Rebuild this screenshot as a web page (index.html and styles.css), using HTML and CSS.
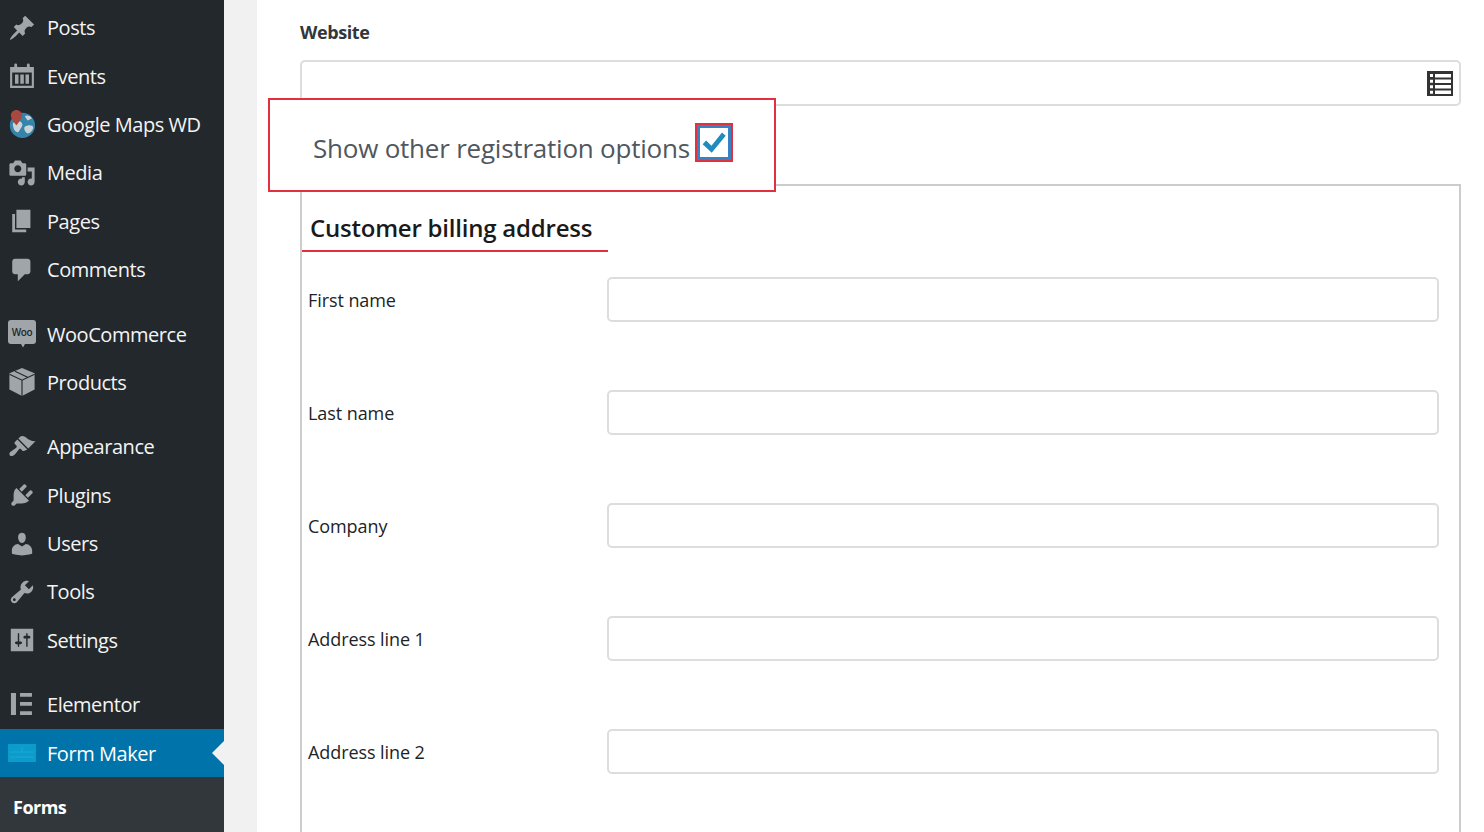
FILE: index.html
```html
<!DOCTYPE html>
<html lang="en">
  <head>
    <meta charset="utf-8">
    <title>Form Maker</title>
    <link rel="stylesheet" href="styles.css">
  </head>
  <body>
    <div class="page">
      <nav class="sidebar">
        <ul class="menu">
          <li class="item"><svg class="icon" viewBox="0 0 20 20"><path d="M10.44 3.02l1.82-1.82 6.36 6.35-1.83 1.82c-1.05-.68-2.48-.57-3.41.36l-.75.75c-.92.93-1.04 2.35-.35 3.41l-1.83 1.82-2.41-2.41-2.8 2.79c-.42.42-3.38 2.71-3.8 2.29s1.86-3.39 2.28-3.81l2.79-2.79L4.1 9.36l1.83-1.82c1.05.69 2.48.57 3.4-.36l.75-.75c.93-.92 1.05-2.35.36-3.41z"/></svg>Posts</li>
          <li class="item"><svg class="icon" viewBox="0 0 20 20"><path fill-rule="evenodd" d="M1.500 3.500h3V2a1 1 0 0 1 2 0v1.500h7V2a1 1 0 0 1 2 0v1.500h3v15h-17zM3 7.500v9.500h14V7.500zM5 9h2.500v6.500H5zM8.800 9h2.500v6.500H8.800zM12.500 9H15v6.500h-2.500z"/></svg>Events</li>
          <li class="item"><svg class="icon" viewBox="0 0 20 20"><circle cx="10.300" cy="11" r="9" fill="#3585ab"/><path d="M4 9c2-2 5-1.500 6 .5s-1 3.500-2 5.500-3.500 0-4-2-1-3 0-4z" fill="#c9d3d8"/><path d="M12 12c2-1.500 6-1.500 6 .5s-3 5-4.500 4-2.500-3.500-1.500-4.500z" fill="#c9d3d8"/><path d="M12 4.500c1.500-1 4-.5 5 1.500l-3 1.500z" fill="#c9d3d8"/><path d="M6 0C3.800 0 2 1.800 2 3.800 2 6.500 6 11 6 11s4-4.500 4-7.200C10 1.800 8.200 0 6 0z" fill="#a8483f"/></svg>Google Maps WD</li>
          <li class="item"><svg class="icon" viewBox="0 0 20 20"><path d="M13 11V4c0-.55-.45-1-1-1h-1.670L9 1H5L3.670 3H2c-.55 0-1 .45-1 1v7c0 .55.45 1 1 1h10c.55 0 1-.45 1-1zM7 4.500c1.380 0 2.500 1.120 2.500 2.500S8.380 9.500 7 9.500 4.500 8.380 4.500 7 5.620 4.500 7 4.500zM14 6h5v10.500c0 1.380-1.120 2.500-2.500 2.500S14 17.880 14 16.500s1.120-2.500 2.500-2.500c.17 0 .34.02.5.05V9h-3V6zm-4 8.050V13h2v3.500c0 1.380-1.120 2.500-2.500 2.500S7 17.880 7 16.500 8.120 14 9.500 14c.17 0 .34.02.5.05z"/></svg>Media</li>
          <li class="item"><svg class="icon" viewBox="0 0 20 20"><path d="M6 15V2h10v13H6zm-1 1h8v2H3V5h2v11z"/></svg>Pages</li>
          <li class="item"><svg class="icon" viewBox="0 0 20 20"><path d="M5 2h9c1.100 0 2 .9 2 2v7c0 1.100-.9 2-2 2h-2l-5 5v-5H5c-1.100 0-2-.9-2-2V4c0-1.100.9-2 2-2z"/></svg>Comments</li>
          <li class="item gap"><svg class="icon icon-woo" viewBox="0 0 28 28"><path d="M3 0h22a3 3 0 0 1 3 3v18a3 3 0 0 1-3 3H17l-2 3.500-2-3.500H3a3 3 0 0 1-3-3V3a3 3 0 0 1 3-3z"/><text class="woo-text" x="14" y="15.500" text-anchor="middle">Woo</text></svg>WooCommerce</li>
          <li class="item"><svg class="icon" viewBox="0 0 20 20"><path d="M10 0l9 3.700v11.600L10 20l-9-4.700V3.700z"/><path d="M1 4.500l9 4.200 9-4.200M10 8.700V20M5 2.300l9 4.300" stroke="#23282d" stroke-width=".8" fill="none"/></svg>Products</li>
          <li class="item gap"><svg class="icon" viewBox="0 0 20 20"><path d="M14.480 11.060L7.410 3.990l1.500-1.500c.5-.56 2.300-.47 3.510.32 1.210.8 1.430 1.280 2.910 2.100 1.180.64 2.450 1.260 4.450.85zm-.71.71L6.700 4.700 4.930 6.470c-.39.39-.39 1.020 0 1.410l1.060 1.060c.39.39.39 1.030 0 1.420-.6.6-1.430 1.110-2.210 1.690-.35.26-.7.53-1.010.84C1.430 13.230.4 14.840 1.400 15.990c1 1.140 2.600.12 3.950-1.230.31-.31.58-.66.84-1.010.58-.78 1.090-1.610 1.690-2.210.39-.39 1.030-.39 1.420 0l1.060 1.060c.39.39 1.020.39 1.410 0z"/></svg>Appearance</li>
          <li class="item"><svg class="icon" viewBox="0 0 20 20"><path d="M13.110 4.360L9.870 7.600 8 5.730l3.240-3.240c.35-.34 1.050-.2 1.560.32.52.51.66 1.210.31 1.550zm-8 1.770l.91-1.120 9.010 9.010-1.190.84c-.71.71-2.630 1.160-3.820 1.160H6.140L4.900 17.260c-.59.59-1.540.59-2.120 0-.59-.58-.59-1.530 0-2.120l1.240-1.240v-3.880c0-1.130.4-3.190 1.090-3.890zm7.260 3.970l3.240-3.240c.34-.35 1.040-.21 1.550.31.52.51.66 1.210.31 1.550l-3.240 3.250z"/></svg>Plugins</li>
          <li class="item"><svg class="icon" viewBox="0 0 20 20"><path d="M10 9.250c-2.270 0-2.730-3.440-2.730-3.440C7 4.020 7.820 2 9.970 2c2.160 0 2.980 2.020 2.710 3.810 0 0-.41 3.440-2.680 3.440zm0 2.570L12.720 10c2.390 0 4.520 2.330 4.520 4.530v2.490s-3.650 1.130-7.240 1.130c-3.650 0-7.240-1.130-7.240-1.130v-2.490c0-2.250 1.940-4.480 4.470-4.480z"/></svg>Users</li>
          <li class="item"><svg class="icon" viewBox="0 0 20 20"><path d="M16.680 9.770c-1.340 1.340-3.300 1.670-4.950.99l-5.410 6.520c-.99.99-2.590.99-3.580 0s-.99-2.590 0-3.570l6.520-5.420c-.68-1.650-.35-3.610.99-4.950 1.280-1.280 3.120-1.620 4.720-1.060l-2.890 2.890 2.820 2.820 2.860-2.870c.53 1.580.18 3.390-1.080 4.650zM3.810 16.210c.4.39 1.040.39 1.430 0 .4-.4.4-1.040 0-1.430-.39-.4-1.030-.4-1.430 0-.39.39-.39 1.030 0 1.430z"/></svg>Tools</li>
          <li class="item"><svg class="icon" viewBox="0 0 20 20"><path d="M18 18V2H2v16zM8 11h1c.55 0 1 .45 1 1s-.45 1-1 1H8v1.500c0 .28-.22.5-.5.5s-.5-.22-.5-.5V13H6c-.55 0-1-.45-1-1s.45-1 1-1h1V5.500c0-.28.22-.5.5-.5s.5.22.5.5V11zm5-2h-1c-.55 0-1-.45-1-1s.45-1 1-1h1V5.500c0-.28.22-.5.5-.5s.5.22.5.5V7h1c.55 0 1 .45 1 1s-.45 1-1 1h-1v5.500c0 .28-.22.5-.5.5s-.5-.22-.5-.5V9z"/></svg>Settings</li>
          <li class="item gap"><svg class="icon" viewBox="0 0 20 20"><path d="M2.100 1.400h3.600v15.800H2.100zM8.600 1.400h8.500v2.700H8.600zM8.600 7.900h8.500v2.700H8.600zM8.600 14.500h8.500v2.700H8.600z"/></svg>Elementor</li>
          <li class="item active"><svg class="icon icon-form" viewBox="0 0 28 20"><rect x="0" y="1" width="28" height="18" fill="#0c9ccb"/><path d="M2 9h24M2 14h24M14 4v5" stroke="#1aa9d4" stroke-width="1" fill="none"/></svg>Form Maker</li>
        </ul>
        <div class="submenu">Forms</div>
      </nav>
      <div class="gutter"></div>
      <main class="content">
        <div class="field-label">Website</div>
        <div class="website">
          <input class="text-input website-input" type="text">
          <svg class="list-icon" viewBox="0 0 26 26">
            <path fill="#333" d="M0 1h26v25H0z"/>
            <path fill="#fff" d="M8 4h16v3.500H8zM8 9.500h16V13H8zM8 15h16v3.500H8zM8 20.500h16V24H8zM3 4h3v3H3zM3 9.700h3v3H3zM3 15.200h3v3H3zM3 20.700h3v3H3z"/>
          </svg>
        </div>

        <section class="billing">
          <h2 class="billing-title">Customer billing address</h2>
          <div class="rows">
            <div class="row"><label class="row-label">First name</label><input class="text-input" type="text"></div>
            <div class="row"><label class="row-label">Last name</label><input class="text-input" type="text"></div>
            <div class="row"><label class="row-label">Company</label><input class="text-input" type="text"></div>
            <div class="row"><label class="row-label">Address line 1</label><input class="text-input" type="text"></div>
            <div class="row"><label class="row-label">Address line 2</label><input class="text-input" type="text"></div>
          </div>
        </section>

        <div class="callout">
          <span class="callout-text">Show other registration options</span>
          <span class="check-ring">
            <span class="check-box">
              <svg viewBox="3 3 18 16.500"><path d="M3.500 12.500l2.600-2.700 4 3.900L18 3.800l2.800 2.300L10.300 19z"/></svg>
            </span>
          </span>
        </div>
      </main>
    </div>
  </body>
</html>
```

FILE: styles.css
```css
* {
  margin: 0;
  padding: 0;
  box-sizing: border-box; }

html, body {
  height: 100%;
  overflow: hidden; }

body {
  background: #fff;
  font-family: "Open Sans", "Noto Sans", Arial, sans-serif;
  color: #23282d; }

.page {
  display: flex;
  height: 832px; }

.sidebar {
  width: 224px;
  flex: none;
  background: #23282d;
  display: flex;
  flex-direction: column; }

.menu {
  list-style: none;
  padding-top: 3.5px; }

.item {
  position: relative;
  display: flex;
  align-items: center;
  height: 48.4px;
  padding-left: 8px;
  font-size: 20px;
  letter-spacing: -0.45px;
  color: #f4f4f4; }
  .item.gap {
    margin-top: 16px; }
  .item.active {
    background: #0073aa;
    color: #fff; }
    .item.active::after {
      content: "";
      position: absolute;
      right: 0;
      top: 50%;
      margin-top: -12px;
      border: 12px solid transparent;
      border-left: 0;
      border-right-color: #f1f1f1; }

.icon {
  width: 28px;
  height: 28px;
  margin-right: 11px;
  flex: none;
  fill: #a0a5aa; }

.icon-form {
  height: 20px; }

.woo-text {
  font-size: 10px;
  font-weight: 600;
  fill: #23282d; }

.submenu {
  flex: 1;
  background: #32373c;
  padding: 17px 0 0 13px;
  font-size: 18px;
  line-height: 26px;
  font-weight: 700;
  letter-spacing: -0.5px;
  color: #fff; }

.gutter {
  width: 33px;
  flex: none;
  background: #f1f1f1; }

.content {
  position: relative;
  flex: 1;
  display: flex;
  flex-direction: column;
  padding: 20px 23px 0 43px; }

.field-label {
  font-size: 18px;
  line-height: 25px;
  font-weight: 700;
  letter-spacing: -0.4px;
  color: #32373c; }

.text-input {
  display: block;
  width: 100%;
  height: 46px;
  background: #fff;
  border: 2px solid #ddd;
  border-radius: 5px;
  outline: 0; }

.website {
  position: relative;
  margin-top: 15px; }

.list-icon {
  position: absolute;
  right: 8px;
  top: 10px;
  width: 26px;
  height: 26px; }

.billing {
  flex: 1;
  margin-top: 78px;
  border: 2px solid #ccc;
  border-bottom: 0;
  padding-top: 25px; }

.billing-title {
  width: 306px;
  padding: 0 0 5px 8px;
  border-bottom: 2px solid #e2303f;
  font-size: 24px;
  line-height: 34px;
  font-weight: 600;
  letter-spacing: -0.22px;
  color: #1a1a1a; }

.rows {
  display: flex;
  flex-direction: column;
  gap: 68px;
  padding: 25px 20px 0 6px; }

.row {
  display: flex; }
  .row .text-input {
    height: 45px; }

.row-label {
  width: 299px;
  flex: none;
  padding-top: 10px;
  font-size: 18px;
  line-height: 26px;
  letter-spacing: -0.08px;
  color: #1d2327; }

.callout {
  position: absolute;
  left: 11px;
  top: 98px;
  width: 508px;
  height: 94px;
  display: flex;
  align-items: center;
  padding-left: 43px;
  background: #fff;
  border: 2px solid #e2303f; }

.callout-text {
  margin-top: 6px;
  font-size: 26px;
  letter-spacing: -0.22px;
  color: #50575e; }

.check-ring {
  align-self: flex-start;
  margin: 23px 0 0 5px;
  width: 38px;
  height: 39px;
  border: 2px solid #e2303f;
  display: flex; }

.check-box {
  flex: 1;
  border: 3px solid #3582c4;
  padding: 3px 2px; }
  .check-box svg {
    display: block;
    width: 100%;
    height: 100%;
    fill: #1e8cbe; }
```
